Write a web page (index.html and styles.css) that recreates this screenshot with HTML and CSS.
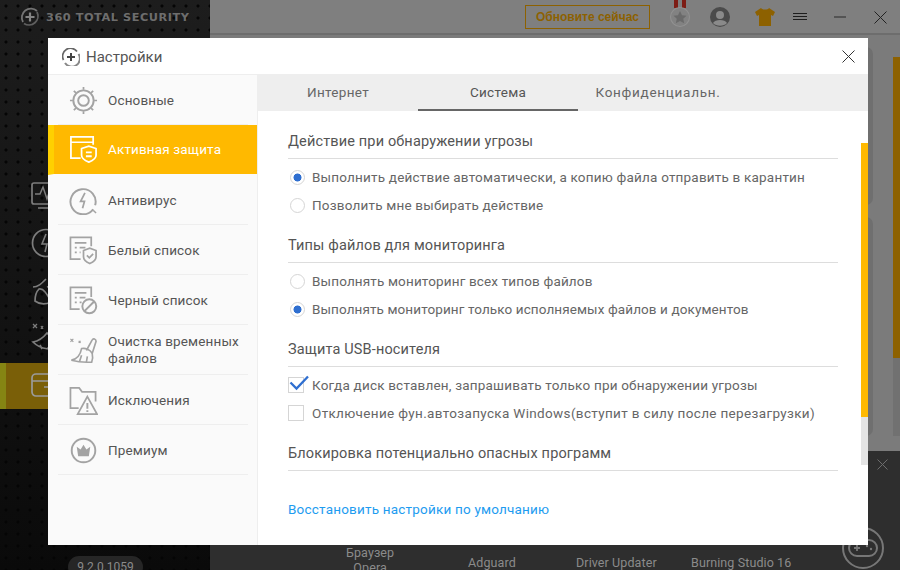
FILE: index.html
```html
<!DOCTYPE html>
<html lang="ru">
<head>
<meta charset="utf-8">
<title>360 Total Security</title>
<link rel="stylesheet" href="styles.css">
</head>
<body>
<div class="app">
  <aside class="rail">
    <div class="brand">
      <svg class="brand-logo" viewBox="0 0 20 20"><path d="M3 15A9 9 0 0 1 17 4" fill="none" stroke="#757575" stroke-width="1.800"/><path d="M17 5A9 9 0 0 1 4 16.500" fill="none" stroke="#5f5f5f" stroke-width="1.800"/><path d="M10 5.500v9M5.500 10h9" stroke="#858585" stroke-width="2.200"/></svg>
      <span class="brand-text">360 TOTAL SECURITY</span>
    </div>
    <div class="rail-icons">
      <div class="rail-item"><svg viewBox="0 0 32 32" width="32" height="32"><path d="M3 2h24a2 2 0 0 1 2 2v17a2 2 0 0 1-2 2H3a2 2 0 0 1-2-2V4a2 2 0 0 1 2-2zM7 27h18" fill="none" stroke="#7d7d7d" stroke-width="1.700"/><path d="M4 13h5l3-7 4 12 2-6h8" fill="none" stroke="#7d7d7d" stroke-width="1.500"/></svg></div>
      <div class="rail-item"><svg viewBox="0 0 32 32" width="32" height="32"><circle cx="15" cy="15" r="13.500" fill="none" stroke="#7d7d7d" stroke-width="1.700"/><path d="M15 6l-4 10h5l-2 8" fill="none" stroke="#7d7d7d" stroke-width="1.600"/></svg></div>
      <div class="rail-item"><svg viewBox="0 0 32 32" width="32" height="32"><path d="M2 12c5 0 8-3 13-8M4 26c0-5 1-9 4-12 4-1 8 4 12 13-6 3-12 2-16-1zM16 12c6-2 10 2 14 8" fill="none" stroke="#7d7d7d" stroke-width="1.700"/></svg></div>
      <div class="rail-item"><svg viewBox="0 0 32 32" width="32" height="32"><path d="M2 2l4 4M6 2L2 6M10 4l2 3M12 4l-2 3" fill="none" stroke="#7d7d7d" stroke-width="1.300"/><path d="M2 20c6-1 10-4 14-9l14 12c-8 6-20 5-28-3zM9 23l2 4M17 25l1 3" fill="none" stroke="#7d7d7d" stroke-width="1.700"/></svg></div>
      <div class="rail-item rail-active"><svg viewBox="0 0 32 32" width="32" height="32"><rect x="1" y="4" width="30" height="22" rx="4" fill="none" stroke="#9a9a9a" stroke-width="1.700"/><path d="M1 11h30M13 17h6" stroke="#9a9a9a" stroke-width="1.700"/></svg></div>
    </div>
    <div class="version">9.2.0.1059</div>
  </aside>
  <main class="stage">
    <header class="topbar">
      <button class="update">Обновите сейчас</button>
      <div class="top-icons">
        <svg class="medal" viewBox="0 0 24 30" width="24" height="30"><path d="M5 0h4v9H5zM13 0h4v9h-4z" fill="#7d1d15"/><circle cx="11" cy="18" r="10" fill="#929292"/><circle cx="11" cy="18" r="9" fill="#828282"/><path d="M11 12l2 4.200 4.500.5-3.300 3 1 4.500-4.200-2.300-4.200 2.300 1-4.500-3.300-3 4.500-.5z" fill="#6a6a6a"/></svg>
        <svg class="ico-user" viewBox="0 0 20 20" width="20" height="20"><circle cx="10" cy="10" r="10" fill="#4b4b4b"/><circle cx="10" cy="8" r="4" fill="#8a8a8a"/><path d="M3 16c2-4 12-4 14 0-3 3.500-11 3.500-14 0z" fill="#8a8a8a"/></svg>
        <svg class="ico-shirt" viewBox="0 0 20 18" width="20" height="18"><path d="M6 0c1 2 7 2 8 0l6 4-2 4-2-1v11H4V7L2 8 0 4z" fill="#8d6100"/></svg>
        <svg class="ico-menu" viewBox="0 0 14 8" width="14" height="8"><path d="M0 .5h14M0 3.500h14M0 6.500h14" stroke="#1d1d1d"/></svg>
        <svg class="ico-min" viewBox="0 0 12 2" width="12" height="2"><path d="M0 1h12" stroke="#2a2a2a"/></svg>
        <svg class="ico-close" viewBox="0 0 13 13" width="13" height="13"><path d="M.5.5l12 12M12.500.5l-12 12" stroke="#222"/></svg>
      </div>
    </header>
    <div class="stage-body">
      <div class="stage-cards">
        <div class="stage-card stage-card-a"></div>
        <div class="stage-card stage-card-b"></div>
      </div>
      <div class="stage-side">
        <div class="stage-accent"></div>
        <div class="stage-rest"></div>
      </div>
    </div>
    <footer class="tray">
      <div class="tray-close"><svg viewBox="0 0 11 11" width="11" height="11"><path d="M.5.5l10 10M10.500.5l-10 10" stroke="#6d6d6d"/></svg></div>
      <div class="tray-apps">
        <span class="tray-app tray-opera">Браузер<br>Opera</span>
        <span class="tray-app tray-adguard">Adguard</span>
        <span class="tray-app tray-driver">Driver Updater</span>
        <span class="tray-app tray-burning">Burning Studio 16</span>
      </div>
      <svg class="tray-game" viewBox="0 0 42 42" width="42" height="42"><circle cx="21" cy="21" r="20" fill="none" stroke="#777" stroke-width="2"/><rect x="7" y="13" width="28" height="16" rx="8" fill="none" stroke="#777" stroke-width="2"/><path d="M12 21h6M15 18v6" stroke="#777" stroke-width="1.800"/><circle cx="25" cy="19" r="1.200" fill="#777"/><circle cx="29" cy="22" r="1.200" fill="#777"/></svg>
    </footer>
  </main>
</div>

<section class="dialog">
  <header class="dlg-head">
    <svg class="dlg-logo" viewBox="1 1 18 18"><path d="M2.500 13A8 8 0 0 1 16 4.500" fill="none" stroke="#666" stroke-width="1.700"/><path d="M17.500 7A8 8 0 0 1 4 16" fill="none" stroke="#888" stroke-width="2"/><path d="M10 6v8M6 10h8" stroke="#444" stroke-width="2"/></svg>
    <span class="dlg-title">Настройки</span>
    <svg class="dlg-close" viewBox="0 0 13 13" width="13" height="13"><path d="M.5.5l12 12M12.500.5l-12 12" stroke="#333"/></svg>
  </header>
  <div class="dlg-body">
    <nav class="side">
      <div class="side-item">
        <svg class="side-icon" viewBox="0 0 30 30"><g fill="none" stroke="#a3a3a3"><circle cx="15" cy="15" r="10.500" stroke-width="2"/><circle cx="15" cy="15" r="5.500" stroke-width="2"/><path d="M15 1v3M15 26v3M1 15h3M26 15h3M5 5l2.200 2.200M25 5l-2.200 2.200M5 25l2.200-2.200M25 25l-2.200-2.200" stroke-width="1.800"/></g></svg>
        <span>Основные</span>
      </div>
      <div class="side-item is-active">
        <svg class="side-icon" viewBox="0 0 30 30"><g fill="none" stroke="#fff" stroke-width="1.800"><path d="M12 24H2V2h23v8M2 7.500h23"/><path d="M13 14l7.500-2.500L28 14v7c0 3-3.500 5.500-7.500 7C16.500 26.500 13 24 13 21z"/><path d="M17.500 18h6M17.500 22h6" stroke-width="2"/></g></svg>
        <span>Активная защита</span>
      </div>
      <div class="side-item">
        <svg class="side-icon" viewBox="0 0 30 30"><g fill="none" stroke="#a3a3a3" stroke-width="2"><path d="M25 24A13 13 0 1 1 27 20"/><path d="M25 25l3 3" stroke-width="1.500"/><path d="M16.500 7l-4.500 9h4l-2 7" stroke-width="1.800"/></g></svg>
        <span>Антивирус</span>
      </div>
      <div class="side-item">
        <svg class="side-icon" viewBox="0 0 30 30"><g fill="none" stroke="#a3a3a3" stroke-width="1.800"><path d="M12 24H1.500V1.500h21.500v9"/><path d="M6 7h12M6 12h2M11 12h6M6 17h2M11 17h1"/><path d="M15 15l6.500-2.500L28 15v6.500c0 3-3 5.500-6.500 7-3.500-1.500-6.500-4-6.500-7z"/><path d="M18.500 20l2.500 2.500 4-4"/></g></svg>
        <span>Белый список</span>
      </div>
      <div class="side-item">
        <svg class="side-icon" viewBox="0 0 30 30"><g fill="none" stroke="#a3a3a3" stroke-width="1.800"><path d="M11 24H1.500V1.500h21.500v10"/><path d="M6 7h12M6 12h2M11 12h6M6 17h2M11 17h2"/><circle cx="21" cy="21" r="7.200" stroke-width="2"/><path d="M16 26l10-10" stroke-width="2"/></g></svg>
        <span>Черный список</span>
      </div>
      <div class="side-item">
        <svg class="side-icon" viewBox="0 0 30 30"><g fill="none" stroke="#a3a3a3" stroke-width="1.700"><path d="M1.500 3l3 3M4.500 3l-3 3M10 5l2 2M12 5l-2 2" stroke-width="1.200"/><path d="M18 15l6-11c1-2 4-1 4 1.500L24 18"/><path d="M13 13c4-1 9 1 11 5 .5 2 .5 6-.500 9-7 .5-14 0-21-2 5-1 9-4 10.500-12z"/><path d="M13 20l-2 6M19 21l-1 6"/></g></svg>
        <span>Очистка временных файлов</span>
      </div>
      <div class="side-item">
        <svg class="side-icon" viewBox="0 0 30 30"><g fill="none" stroke="#a3a3a3" stroke-width="1.800"><path d="M10 23H1.500V2h9l3 4h14v10"/></g><path d="M19 11l10 18H9z" fill="none" stroke="#a3a3a3" stroke-width="1.800"/><path d="M19 17.500v6M19 25v2" stroke="#a3a3a3" stroke-width="2"/></svg>
        <span>Исключения</span>
      </div>
      <div class="side-item">
        <svg class="side-icon" viewBox="0 0 30 30"><circle cx="15" cy="15" r="12.200" fill="none" stroke="#a3a3a3" stroke-width="2"/><path d="M8 11l4 3 3-5 3 5 4-3-1.500 10h-11z" fill="#a3a3a3"/></svg>
        <span>Премиум</span>
      </div>
    </nav>
    <div class="panel">
      <div class="tabs">
        <div class="tab">Интернет</div>
        <div class="tab is-current">Система</div>
        <div class="tab tab-priv">Конфиденциальн.</div>
      </div>
      <div class="content">
        <div class="group">
          <h2 class="group-title">Действие при обнаружении угрозы</h2>
          <div class="opt"><i class="radio is-on"></i><span>Выполнить действие автоматически, а копию файла отправить в карантин</span></div>
          <div class="opt"><i class="radio"></i><span>Позволить мне выбирать действие</span></div>
        </div>
        <div class="group">
          <h2 class="group-title">Типы файлов для мониторинга</h2>
          <div class="opt opt-snug"><i class="radio"></i><span>Выполнять мониторинг всех типов файлов</span></div>
          <div class="opt opt-tight"><i class="radio is-on"></i><span>Выполнять мониторинг только исполняемых файлов и документов</span></div>
        </div>
        <div class="group">
          <h2 class="group-title">Защита USB-носителя</h2>
          <div class="opt"><i class="check"><svg viewBox="0 0 20 16" width="20" height="16"><path d="M1.500 7.500l6 6L19 1.500" fill="none" stroke="#2f6fd0" stroke-width="2.300"/></svg></i><span>Когда диск вставлен, запрашивать только при обнаружении угрозы</span></div>
          <div class="opt opt-wide"><i class="check"></i><span>Отключение фун.автозапуска Windows(вступит в силу после перезагрузки)</span></div>
        </div>
        <div class="group">
          <h2 class="group-title">Блокировка потенциально опасных программ</h2>
        </div>
        <a class="reset">Восстановить настройки по умолчанию</a>
        <div class="scroll"><div class="scroll-thumb"></div></div>
      </div>
    </div>
  </div>
</section>
</body>
</html>
```
FILE: styles.css
```css
* { box-sizing: border-box; }
html, body { margin: 0; padding: 0; width: 900px; height: 570px; overflow: hidden; }
body { font-family: Roboto, "Noto Sans", sans-serif; color: #555; background: #000; }

.app { display: flex; width: 900px; height: 570px; }

.rail {
  width: 210px; height: 570px; display: flex; flex-direction: column;
  background-color: #0e0e0e;
  background-image: radial-gradient(circle at 50% 50%, #050505 0 1.300px, transparent 1.800px), linear-gradient(#1d1d1d, #0a0a0a);
  background-size: 12px 12px, 100% 100%;
}
.brand { height: 34px; display: flex; align-items: center; padding-left: 20px; gap: 6px; }
.brand-logo { width: 20px; height: 20px; }
.brand-text { font-family: "DejaVu Sans", sans-serif; font-weight: 700; font-size: 11.300px; letter-spacing: .55px; color: #6d6d6d; white-space: nowrap; }
.rail-icons { margin-top: 139px; display: flex; flex-direction: column; }
.rail-item { height: 47px; padding-left: 31px; display: flex; align-items: center; }
.rail-active { height: 46px; margin-top: 2px; background: #7a5f08; border-left: 6px solid #858513; padding-left: 25px; }
.version {
  margin: auto 0 -8px 68px; width: 75px; height: 22px; border-radius: 11px; background: #262626;
  color: #8a8a8a; font-size: 12px; text-align: center; line-height: 22px;
}

.stage { flex: 1; display: flex; flex-direction: column; background: #7b7b7b; }
.topbar {
  height: 35px; padding: 5px 0 0 315px; display: flex; align-items: flex-start;
  background: #7f7f7f; border-bottom: 2px solid #6d6d6d;
}
.update {
  width: 125px; height: 24px; padding: 0; background: transparent; border: 1px solid #8d6100;
  color: #8d6100; font-family: "Liberation Sans", sans-serif; font-weight: 700; font-size: 12px;
}
.top-icons { display: flex; align-items: center; margin-left: 19px; height: 24px; }
.medal { margin-top: -6px; }
.ico-user { margin-left: 17px; }
.ico-shirt { margin-left: 25px; }
.ico-menu { margin-left: 18px; }
.ico-min { margin-left: 27px; }
.ico-close { margin-left: 28px; }
.stage-body { flex: 1; display: flex; }
.stage-cards { width: 663px; padding-top: 12px; display: flex; flex-direction: column; gap: 12px; }
.stage-card { background: #6f6f6f; border-radius: 0 7px 7px 0; }
.stage-card-a { height: 158px; }
.stage-card-b { flex: 1; margin-bottom: 15px; }
.stage-side { flex: 1; display: flex; flex-direction: column; align-items: flex-end; padding-top: 22px; }
.stage-accent { width: 7px; height: 301px; background: #8d6100; }
.stage-rest { width: 7px; height: 78px; background: #717171; }
.tray { height: 119px; position: relative; background: #2e2e2e; }
.tray-close { position: absolute; right: 12px; top: 8px; line-height: 0; }
.tray-apps { position: absolute; inset: 0; }
.tray-app { position: absolute; color: #8b8b8b; font-size: 12.500px; letter-spacing: .1px; line-height: 15px; text-align: center; white-space: nowrap; }
.tray-opera { left: 136px; top: 94px; }
.tray-adguard { left: 258px; top: 104px; }
.tray-driver { left: 366px; top: 104px; }
.tray-burning { left: 481px; top: 104px; }
.tray-game { position: absolute; left: 632px; top: 76px; }

.dialog {
  position: absolute; left: 48px; top: 38px; width: 820px; height: 507px;
  display: flex; flex-direction: column; background: #fff;
}
.dlg-head { height: 36px; display: flex; align-items: center; padding: 1px 14px 0; flex: none; }
.dlg-logo { width: 18px; height: 18px; flex: none; }
.dlg-title { margin-left: 6px; font-size: 15px; color: #555; }
.dlg-close { margin-left: auto; margin-right: -1px; }
.dlg-body { flex: 1; display: flex; min-height: 0; }

.side { width: 210px; flex: none; background: #fafafa; border-right: 1px solid #eee; border-top: 1px solid #eee; }
.side-item {
  width: 190px; height: 50px; margin-left: 10px; padding: 1px 0 0 11px; display: flex; align-items: center;
  border-bottom: 1px solid #eee; font-size: 13.500px; letter-spacing: .15px; line-height: 17px; color: #555;
}
.side-item span { margin-left: 10px; width: 145px; }
.side-icon { width: 29px; height: 29px; flex: none; }
.side-item.is-active {
  width: 209px; margin-left: 0; padding: 0 0 0 15px; background: #ffb900 padding-box; border-left: 6px solid #ffd000;
  color: #fff; border-bottom: 1px solid #fafafa;
}

.panel { flex: 1; display: flex; flex-direction: column; min-width: 0; }
.tabs { height: 37px; flex: none; display: flex; background: #eee; font-size: 13.500px; color: #666; letter-spacing: .3px; }
.tab { width: 160px; text-align: center; line-height: 37px; }
.tab-priv { letter-spacing: .72px; white-space: nowrap; }
.is-current { border-bottom: 2px solid #666; color: #555; }
.content { flex: 1; position: relative; padding: 20px 30px 0 30px; }
.group { margin-bottom: 16px; }
.group-title {
  margin: 0 0 4px; font-size: 14.500px; font-weight: 400; letter-spacing: .15px; color: #555; line-height: 21px;
  padding-bottom: 6px; border-bottom: 1px solid #ddd; box-sizing: content-box;
}
.opt { height: 28px; display: flex; align-items: center; font-size: 13.500px; letter-spacing: .2px; color: #666; }
.opt-snug { letter-spacing: .15px; }
.opt-tight { letter-spacing: .1px; }
.opt-wide { letter-spacing: .34px; }
.opt span { margin-left: 8px; white-space: nowrap; }
.radio { width: 15px; height: 15px; margin-left: 2px; margin-right: -1px; border: 1px solid #d5d5d5; border-radius: 50%; flex: none; background: #fff; }
.radio.is-on { background: radial-gradient(circle, #2f6fd0 0 3.700px, #fff 4.300px); }
.check { width: 16px; height: 16px; border: 1px solid #d5d5d5; flex: none; background: #fff; position: relative; }
.check svg { position: absolute; left: 0; top: -3px; }
.reset { display: block; margin-top: 30px; color: #1e9cf0; font-size: 13.500px; letter-spacing: .2px; }
.scroll { position: absolute; right: 0; top: 32px; width: 7px; height: 322px; background: #e4e4e4; }
.scroll-thumb { width: 7px; height: 274px; background: #ffb900; }
```
